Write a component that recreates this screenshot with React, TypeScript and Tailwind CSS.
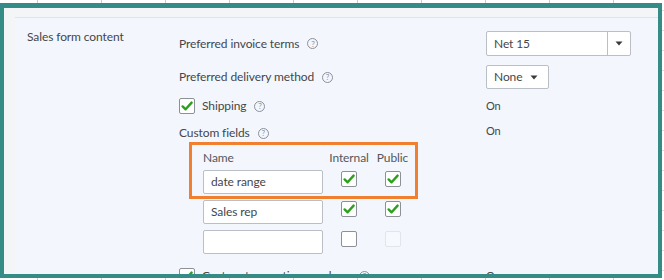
import React from "react";

function Help() {
  return (
    <span className="ml-[8px] inline-flex h-[11px] w-[11px] shrink-0 items-center justify-center rounded-full border border-[#8d9096] text-[8px] leading-none text-[#8d9096]">
      ?
    </span>
  );
}

function Check({ checked = false, disabled = false }: { checked?: boolean; disabled?: boolean }) {
  return (
    <span
      className={
        disabled
          ? "flex h-[16px] w-[16px] shrink-0 items-center justify-center rounded-[2px] border border-[#e3e5e8] bg-[#f6f9fd]"
          : "flex h-[16px] w-[16px] shrink-0 items-center justify-center rounded-[2px] border border-[#8d9096] bg-white"
      }
    >
      {checked && (
        <svg width="14" height="14" viewBox="0 0 14 14">
          <path d="M2.6 7.4 L5.6 10.3 L11.6 3.6" fill="none" stroke="#2ca01c" strokeWidth="2.4" strokeLinecap="round" strokeLinejoin="round" />
        </svg>
      )}
    </span>
  );
}

function Arrow() {
  return (
    <svg width="8" height="5" viewBox="0 0 8 5">
      <path d="M0.5 0.5 L7.5 0.5 L4 4.5 Z" fill="#393a3d" />
    </svg>
  );
}

function FieldRow({ value, internal, pub, pubDisabled }: { value: string; internal: boolean; pub: boolean; pubDisabled?: boolean }) {
  return (
    <div className="flex">
      <div className="mr-[4px] flex h-[24px] w-[120px] items-center rounded-[2px] border border-[#babec5] bg-white pl-[7px] text-[12px] text-[#45464a]">
        {value}
      </div>
      <div className="flex w-[44px] justify-center pt-[1px]">
        <Check checked={internal} />
      </div>
      <div className="flex w-[43px] justify-center pt-[1px]">
        <Check checked={pub} disabled={pubDisabled} />
      </div>
    </div>
  );
}

export default function App() {
  return (
    <div className="h-[280px] w-[664px] overflow-hidden bg-white pb-[2px] pr-[2px] pt-[3px] font-['Lato',sans-serif] [background-image:linear-gradient(to_right,#cccccc_1px,transparent_1px),linear-gradient(to_bottom,#dddddd_1px,transparent_1px)] [background-position:37px_0,0_10px] [background-size:64px_20px,20px_20px]">
      <div className="flex h-full flex-col border-x-4 border-b-4 border-t-[5px] border-[#358b86] bg-[#f4f5f7] pl-[11px] pt-[9px]">
        <div className="flex flex-1 overflow-hidden border-t border-[#e1e3e7] bg-[#f3f7fd] pl-[12px] text-[12px] tracking-[-0.1px] text-[#45464a]">
          <div className="w-[152px] shrink-0 pt-[11px] leading-[16px]">Sales form content</div>
          <div className="flex flex-col pt-[13px]">
            {/* Row 1 */}
            <div className="flex h-[25px] items-center">
              <div className="flex w-[307px] items-center">
                <span>Preferred invoice terms</span>
                <Help />
              </div>
              <div className="flex h-[25px] w-[145px] items-center rounded-[2px] border border-[#babec5] bg-white">
                <span className="flex-1 pl-[7px]">Net 15</span>
                <span className="flex h-full w-[23px] items-center justify-center border-l border-[#babec5]">
                  <Arrow />
                </span>
              </div>
            </div>
            {/* Row 2 */}
            <div className="mt-[9px] flex h-[24px] items-center">
              <div className="flex w-[307px] items-center">
                <span>Preferred delivery method</span>
                <Help />
              </div>
              <div className="flex h-[24px] w-[63px] items-center rounded-[2px] border border-[#babec5] bg-white">
                <span className="flex-1 pl-[7px]">None</span>
                <span className="pr-[10px]">
                  <Arrow />
                </span>
              </div>
            </div>
            {/* Row 3 */}
            <div className="mt-[9px] flex h-[16px] items-center">
              <div className="flex w-[307px] items-center">
                <Check checked />
                <span className="ml-[7px]">Shipping</span>
                <Help />
              </div>
              <span className="text-[11px]">On</span>
            </div>
            {/* Row 4 */}
            <div className="mt-[11px] flex h-[16px] items-center">
              <div className="flex w-[307px] items-center">
                <span>Custom fields</span>
                <Help />
              </div>
              <span className="-mt-[3px] text-[11px]">On</span>
            </div>
            {/* Highlighted box */}
            <div className="ml-[10px] mt-[1px] w-[229px] border-[3px] border-[#f0802e] pb-[2px] pl-[11px] pt-[5px]">
              <div className="flex h-[16px] items-center text-[#55565a]">
                <span className="w-[124px]">Name</span>
                <span className="w-[44px] text-center">Internal</span>
                <span className="w-[43px] text-center">Public</span>
              </div>
              <div className="mt-[4px]">
                <FieldRow value="date range" internal pub />
              </div>
            </div>
            <div className="ml-[24px] mt-[1px]">
              <FieldRow value="Sales rep" internal pub />
            </div>
            <div className="ml-[24px] mt-[6px]">
              <FieldRow value="" internal={false} pub={false} pubDisabled />
            </div>
            {/* Bottom row (cut off by the frame, as in the reference) */}
            <div className="mt-[14px] flex h-[16px] items-center">
              <div className="flex w-[307px] items-center">
                <Check checked />
                <span className="ml-[7px]">Custom transaction numbers</span>
                <Help />
              </div>
              <span className="text-[11px]">On</span>
            </div>
          </div>
        </div>
      </div>
    </div>
  );
}
